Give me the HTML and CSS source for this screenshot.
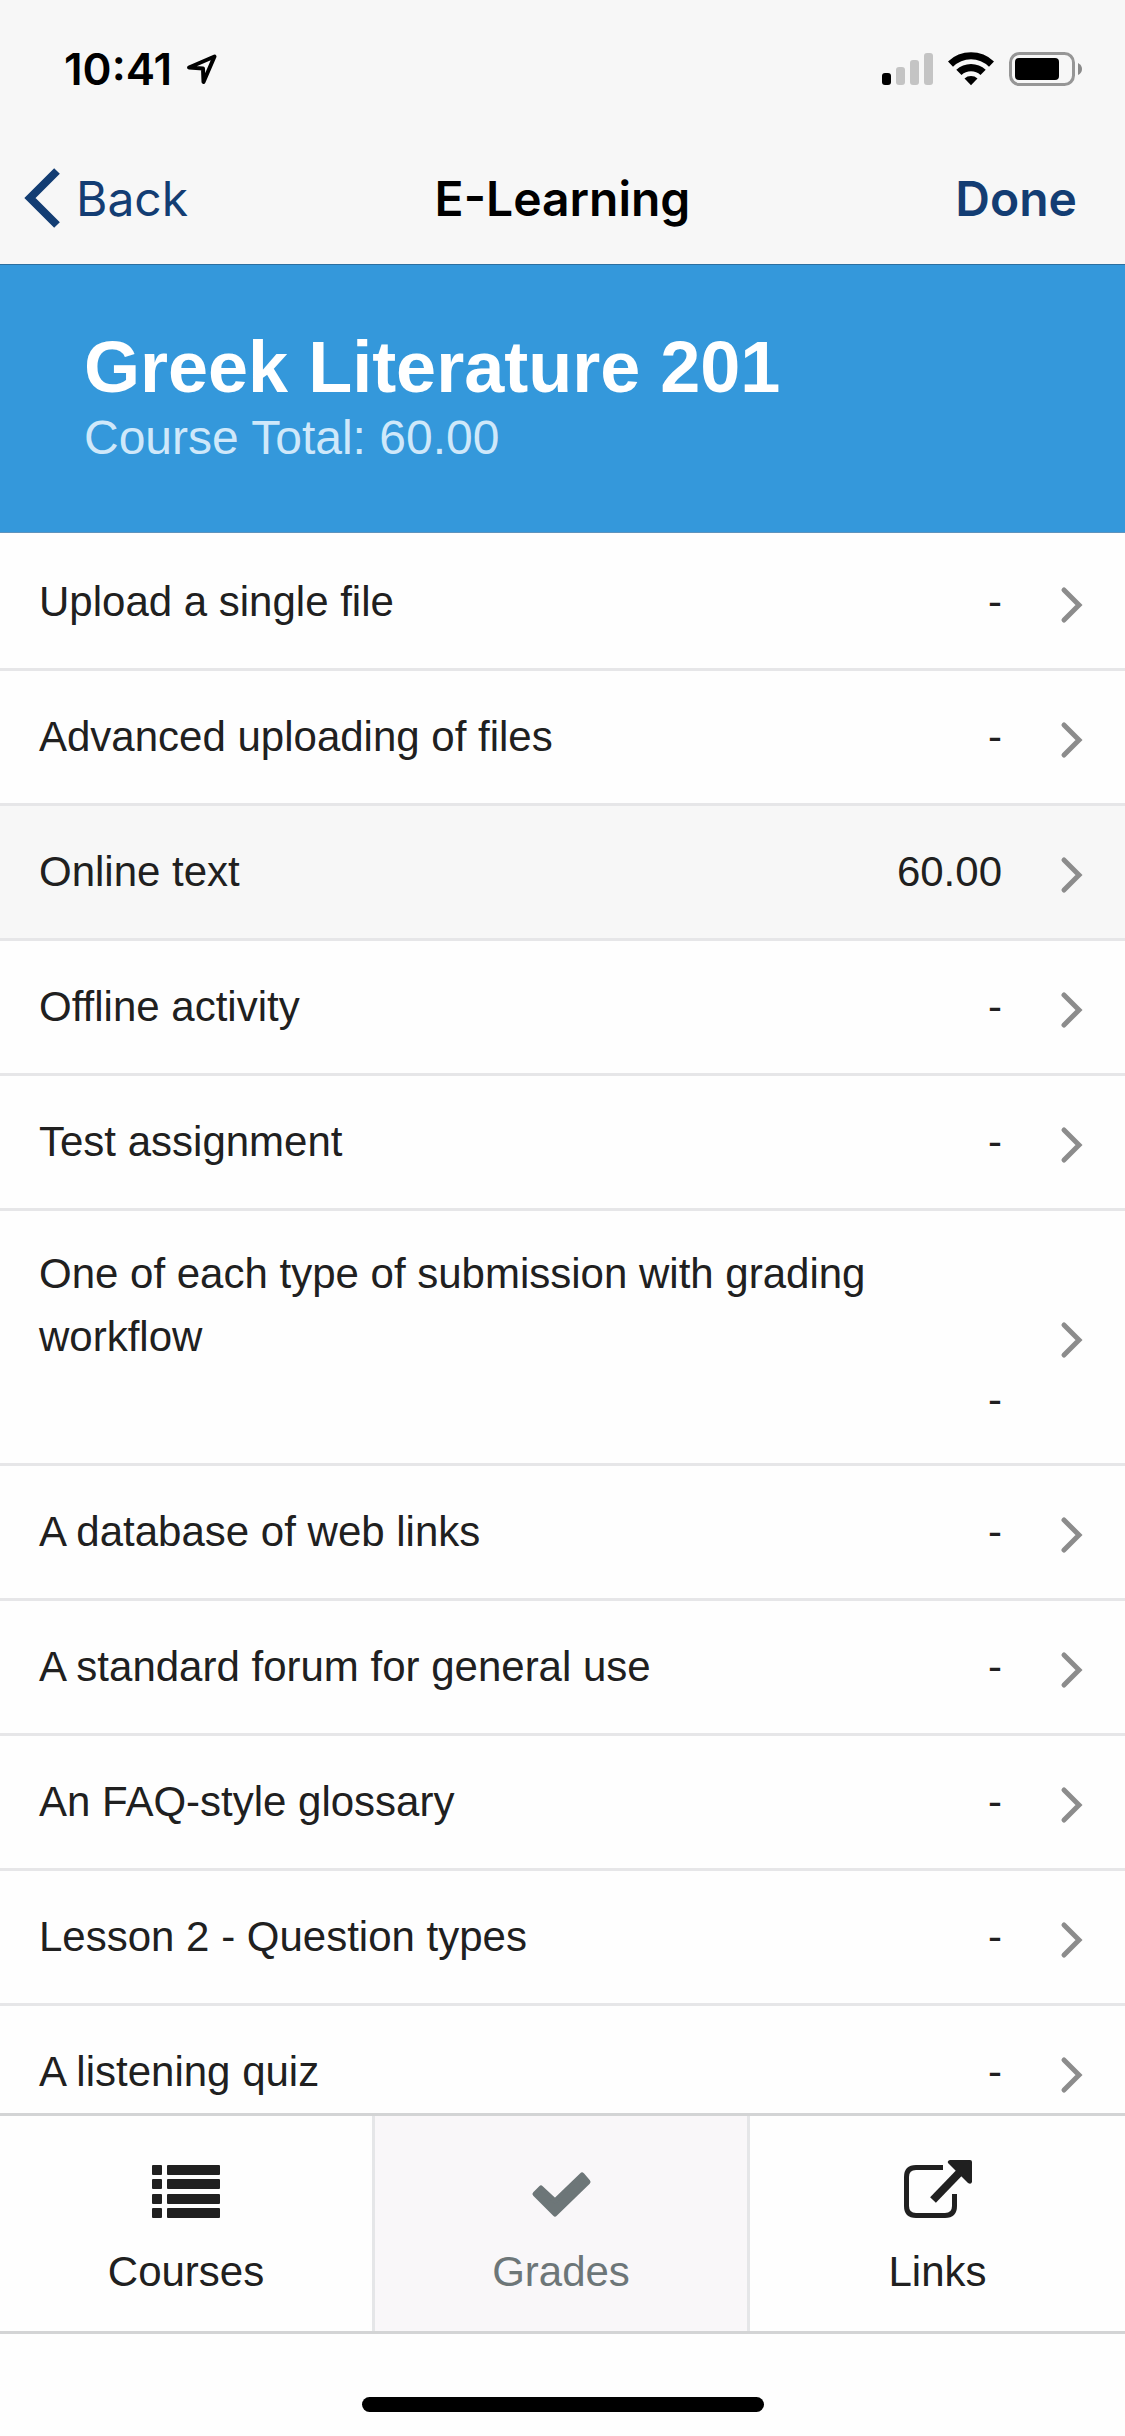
FILE: index.html
```html
<!DOCTYPE html>
<html lang="en">
<head>
<meta charset="utf-8">
<meta name="viewport" content="width=device-width, initial-scale=1">
<title>E-Learning</title>
<link rel="stylesheet" href="styles.css">
</head>
<body>
<svg class="defs" aria-hidden="true">
  <symbol id="chevron" viewBox="0 0 24 44"><path d="M5 10 L20 25 L5 40" fill="none" stroke="#8c8c8c" stroke-width="5" stroke-linecap="round"/></symbol>
</svg>
<div class="app">
  <header class="top">
    <div class="status">
      <div class="status-left">
        <span class="time">10:41</span>
        <svg class="locate" viewBox="0 0 32 32" aria-hidden="true"><path d="M3 14.500 L28.500 3.500 L17.500 29 L17 15.500 Z" fill="none" stroke="#000" stroke-width="4" stroke-linejoin="round"/></svg>
      </div>
      <div class="status-right">
        <svg class="signal" viewBox="0 0 51 34" aria-hidden="true">
          <rect x="0" y="21" width="9" height="12" rx="3"/>
          <g fill="#c4c4c4"><rect x="14" y="15" width="9" height="18" rx="3"/><rect x="28" y="8" width="9" height="25" rx="3"/><rect x="42" y="1" width="9" height="32" rx="3"/></g>
        </svg>
        <svg class="wifi" viewBox="0 0 46 34" aria-hidden="true">
          <path d="M0 9.500 A33 33 0 0 1 46 9.500 L41 14.800 A25.500 25.500 0 0 0 5 14.800 Z"/>
          <path d="M8.300 17.700 A21.500 21.500 0 0 1 37.700 17.700 L32.500 22.900 A14 14 0 0 0 13.500 22.900 Z"/>
          <path d="M16.500 26.500 A10 10 0 0 1 29.500 26.500 L23 33.300 Z"/>
        </svg>
        <svg class="battery" viewBox="0 0 74 34" aria-hidden="true">
          <rect x="1.500" y="1.500" width="63" height="31" rx="9" fill="none" stroke="#969696" stroke-width="3"/>
          <rect x="6" y="6" width="44" height="22" rx="4"/>
          <path d="M69 11 Q73 13 73 17 Q73 21 69 23 Z" fill="#8a8a8a"/>
        </svg>
      </div>
    </div>
    <nav class="navbar">
      <button class="nav-btn back" type="button">
        <svg viewBox="0 0 36 60" aria-hidden="true"><path d="M33 3 L6 30 L33 57" fill="none" stroke="#133d73" stroke-width="8"/></svg>
        Back
      </button>
      <h1 class="nav-title">E-Learning</h1>
      <button class="nav-btn done" type="button">Done</button>
    </nav>
  </header>

  <section class="course">
    <h2 class="course-name">Greek Literature 201</h2>
    <p class="course-total">Course Total: 60.00</p>
  </section>

  <main class="scroll">
    <ul class="grades">
      <li><a class="row" href="#"><span class="cells"><span class="name">Upload a single file</span><span class="value">-</span></span><svg class="chevron"><use href="#chevron"/></svg></a></li>
      <li><a class="row" href="#"><span class="cells"><span class="name">Advanced uploading of files</span><span class="value">-</span></span><svg class="chevron"><use href="#chevron"/></svg></a></li>
      <li><a class="row graded" href="#"><span class="cells"><span class="name">Online text</span><span class="value">60.00</span></span><svg class="chevron"><use href="#chevron"/></svg></a></li>
      <li><a class="row" href="#"><span class="cells"><span class="name">Offline activity</span><span class="value">-</span></span><svg class="chevron"><use href="#chevron"/></svg></a></li>
      <li><a class="row" href="#"><span class="cells"><span class="name">Test assignment</span><span class="value">-</span></span><svg class="chevron"><use href="#chevron"/></svg></a></li>
      <li><a class="row" href="#"><span class="cells"><span class="name">One of each type of submission with grading workflow</span><span class="value">-</span></span><svg class="chevron"><use href="#chevron"/></svg></a></li>
      <li><a class="row" href="#"><span class="cells"><span class="name">A database of web links</span><span class="value">-</span></span><svg class="chevron"><use href="#chevron"/></svg></a></li>
      <li><a class="row" href="#"><span class="cells"><span class="name">A standard forum for general use</span><span class="value">-</span></span><svg class="chevron"><use href="#chevron"/></svg></a></li>
      <li><a class="row" href="#"><span class="cells"><span class="name">An FAQ-style glossary</span><span class="value">-</span></span><svg class="chevron"><use href="#chevron"/></svg></a></li>
      <li><a class="row" href="#"><span class="cells"><span class="name">Lesson 2 - Question types</span><span class="value">-</span></span><svg class="chevron"><use href="#chevron"/></svg></a></li>
      <li><a class="row" href="#"><span class="cells"><span class="name">A listening quiz</span><span class="value">-</span></span><svg class="chevron"><use href="#chevron"/></svg></a></li>
    </ul>
  </main>

  <nav class="tabs">
    <a class="tab" href="#">
      <svg class="tab-icon" viewBox="0 0 68 64" aria-hidden="true"><g fill="#202020"><rect y="8" width="10" height="10" rx="1"/><rect x="15" y="8" width="53" height="10" rx="1"/><rect y="22" width="10" height="10" rx="1"/><rect x="15" y="22" width="53" height="10" rx="1"/><rect y="37" width="10" height="10" rx="1"/><rect x="15" y="37" width="53" height="10" rx="1"/><rect y="51" width="10" height="10" rx="1"/><rect x="15" y="51" width="53" height="10" rx="1"/></g></svg>
      <span>Courses</span>
    </a>
    <a class="tab active" href="#" aria-current="page">
      <svg class="tab-icon" viewBox="0 0 68 64" aria-hidden="true"><path d="M8 37 L14 31 L28 44 L55 18 L61 25 L28 57 Z" fill="#6d7678" stroke="#6d7678" stroke-width="5" stroke-linejoin="round"/></svg>
      <span>Grades</span>
    </a>
    <a class="tab" href="#">
      <svg class="tab-icon" viewBox="0 0 68 64" aria-hidden="true"><path d="M39 10.500 H12 Q2.500 10.500 2.500 20 V49 Q2.500 58.500 12 58.500 H41 Q50.500 58.500 50.500 49 V37" fill="none" stroke="#202020" stroke-width="5"/><path d="M29 43 L56 15" stroke="#202020" stroke-width="8"/><path d="M46 3 H66 Q68 3 68 5 V25 Q67 28 64 26 L44 6 Q43 4 46 3 Z" fill="#202020"/></svg>
      <span>Links</span>
    </a>
  </nav>
  <div class="home"><div class="home-bar"></div></div>
</div>
</body>
</html>
```
FILE: styles.css
```css
* { box-sizing: border-box; }

body {
  margin: 0;
  background: #fefefe;
  color: #202020;
  font-family: "Liberation Sans", Arial, sans-serif;
  font-size: 42px;
  line-height: 63px;
}

.defs { position: absolute; width: 0; height: 0; }

svg { display: block; flex: none; }

.app {
  display: flex;
  flex-direction: column;
  height: 100vh;
}

.top {
  background: #f7f7f7;
  border-bottom: 1px solid #2d6f9f;
  font-family: Inter, "Liberation Sans", sans-serif;
  color: #000;
}

.status {
  display: flex;
  align-items: center;
  justify-content: space-between;
  height: 132px;
  padding: 6px 42px 0 64px;
}

.status-left { display: flex; align-items: center; gap: 14px; }
.status-right { display: flex; align-items: center; gap: 15px; }
.time { font-size: 44px; font-weight: 600; }
.locate { width: 32px; height: 32px; }
.signal { width: 51px; height: 34px; }
.wifi { width: 46px; height: 34px; }
.battery { width: 74px; height: 34px; }

.navbar {
  display: grid;
  grid-template-columns: 1fr auto 1fr;
  align-items: center;
  height: 132px;
  padding: 0 24px;
}

.nav-title { margin: 0; font-size: 48px; font-weight: 600; }

.nav-btn {
  display: flex;
  align-items: center;
  gap: 16px;
  padding: 0;
  border: 0;
  background: none;
  color: #133d73;
  font: inherit;
  font-size: 48px;
}

.back svg { width: 36px; height: 60px; }
.done { justify-self: end; padding-right: 24px; font-weight: 600; }

.course {
  padding: 63px 84px;
  background: #3498db;
  border-bottom: 1px solid #5e93bd;
  color: #fff;
}

.course-name { margin: 0; font-size: 72px; line-height: 78px; font-weight: 700; }
.course-total { margin: 0; font-size: 48px; color: #cfe8fa; }

.scroll {
  flex: 1;
  min-height: 0;
  overflow-y: auto;
  scrollbar-width: none;
}

.grades {
  margin: 0;
  padding: 3px 0 0;
  list-style: none;
}

.row {
  display: flex;
  align-items: center;
  gap: 57px;
  min-height: 135px;
  padding: 0 42px 0 39px;
  border-bottom: 3px solid #e6e6e8;
  color: inherit;
  text-decoration: none;
}

.graded { background: #f7f7f7; }

.cells {
  display: flex;
  flex: 1;
  flex-wrap: wrap;
  padding: 31px 0 32px;
}

.value { margin-left: auto; }
.chevron { width: 24px; height: 44px; }

.tabs {
  display: grid;
  grid-template-columns: repeat(3, 1fr);
  border-top: 3px solid #d3d4d5;
  border-bottom: 3px solid #d3d4d5;
}

.tab {
  display: flex;
  flex-direction: column;
  align-items: center;
  gap: 19px;
  padding: 41px 0 28px;
  border-right: 3px solid #e5e6e8;
  color: inherit;
  text-decoration: none;
}

.tab:last-child { border-right: 0; }
.tab-icon { width: 68px; height: 64px; }
.active { background: #f9f7f9; color: #6d7678; }

.home {
  display: flex;
  justify-content: center;
  padding: 63px 0 24px;
}

.home-bar { width: 402px; height: 15px; border-radius: 8px; background: #000; }
```
